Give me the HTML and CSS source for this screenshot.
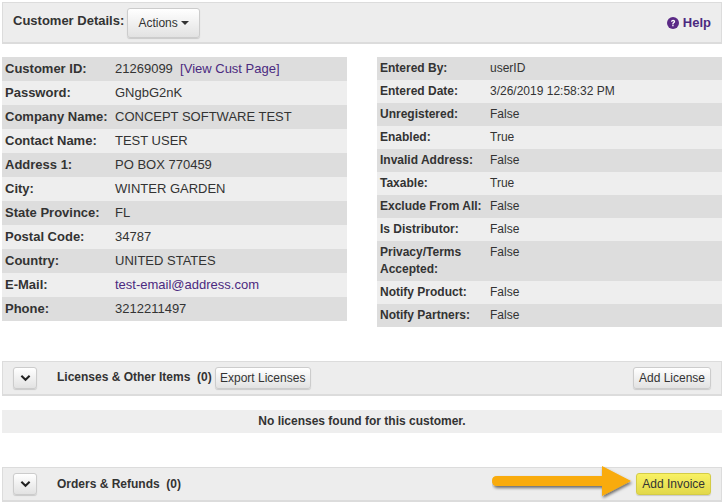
FILE: index.html
```html
<!DOCTYPE html>
<html lang="en">
<head>
<meta charset="utf-8">
<title>Customer Details</title>
<link rel="stylesheet" href="styles.css">
</head>
<body>
<div class="page">
  <header class="bar top-bar">
    <strong class="top-title">Customer Details:</strong>
    <button class="btn btn-actions">Actions <span class="caret"></span></button>
    <a class="help" href="#"><svg class="help-icon" viewBox="0 0 24 24"><circle cx="12" cy="12" r="12" fill="#5b2a86"/><path d="M8 9.500C8 7 9.800 5.500 12.200 5.500S16.300 7 16.300 9.100c0 3-3.200 3-3.200 5.200h-2.600c0-3.400 3-3.400 3-5.100 0-.8-.6-1.300-1.400-1.300-.9 0-1.400.6-1.500 1.600zM10.500 15.600h2.700v2.700h-2.700z" fill="#fff"/></svg> Help</a>
  </header>

  <div class="details">
    <dl class="table table-left">
      <div class="row"><dt>Customer ID:</dt><dd>21269099&nbsp; <a href="#">[View Cust Page]</a></dd></div>
      <div class="row"><dt>Password:</dt><dd>GNgbG2nK</dd></div>
      <div class="row"><dt>Company Name:</dt><dd>CONCEPT SOFTWARE TEST</dd></div>
      <div class="row"><dt>Contact Name:</dt><dd>TEST USER</dd></div>
      <div class="row"><dt>Address 1:</dt><dd>PO BOX 770459</dd></div>
      <div class="row"><dt>City:</dt><dd>WINTER GARDEN</dd></div>
      <div class="row"><dt>State Province:</dt><dd>FL</dd></div>
      <div class="row"><dt>Postal Code:</dt><dd>34787</dd></div>
      <div class="row"><dt>Country:</dt><dd>UNITED STATES</dd></div>
      <div class="row"><dt>E-Mail:</dt><dd><a href="#">test-email@address.com</a></dd></div>
      <div class="row"><dt>Phone:</dt><dd>3212211497</dd></div>
    </dl>
    <dl class="table table-right">
      <div class="row"><dt>Entered By:</dt><dd>userID</dd></div>
      <div class="row"><dt>Entered Date:</dt><dd>3/26/2019 12:58:32 PM</dd></div>
      <div class="row"><dt>Unregistered:</dt><dd>False</dd></div>
      <div class="row"><dt>Enabled:</dt><dd>True</dd></div>
      <div class="row"><dt>Invalid Address:</dt><dd>False</dd></div>
      <div class="row"><dt>Taxable:</dt><dd>True</dd></div>
      <div class="row"><dt>Exclude From All:</dt><dd>False</dd></div>
      <div class="row"><dt>Is Distributor:</dt><dd>False</dd></div>
      <div class="row"><dt>Privacy/Terms Accepted:</dt><dd>False</dd></div>
      <div class="row"><dt>Notify Product:</dt><dd>False</dd></div>
      <div class="row"><dt>Notify Partners:</dt><dd>False</dd></div>
    </dl>
  </div>

  <section class="bar section-bar licenses-bar">
    <button class="btn btn-toggle"><svg viewBox="0 0 12 8" class="chev"><path d="M1.500 1.500 6 6l4.500-4.500" fill="none" stroke="#222" stroke-width="2.200"/></svg></button>
    <strong class="section-title">Licenses &amp; Other Items&nbsp; (0)</strong>
    <button class="btn btn-small btn-export">Export Licenses</button>
    <button class="btn btn-small btn-end">Add License</button>
  </section>

  <div class="empty">No licenses found for this customer.</div>

  <section class="bar section-bar orders-bar">
    <button class="btn btn-toggle"><svg viewBox="0 0 12 8" class="chev"><path d="M1.500 1.500 6 6l4.500-4.500" fill="none" stroke="#222" stroke-width="2.200"/></svg></button>
    <strong class="section-title">Orders &amp; Refunds&nbsp; (0)</strong>
    <button class="btn btn-small btn-end btn-yellow">Add Invoice</button>
  </section>

  <svg class="arrow" viewBox="0 0 146 42" width="146" height="42">
    <defs><filter id="sh" x="-10%" y="-30%" width="120%" height="170%"><feDropShadow dx="1" dy="2" stdDeviation="1.800" flood-color="#000" flood-opacity=".55"/></filter></defs>
    <path filter="url(#sh)" d="M5 11H110V1L139 16 110 31V21H5Q0 21 0 16T5 11Z" fill="#f9ab08"/>
  </svg>
</div>
</body>
</html>
```

FILE: styles.css
```css
* { box-sizing: border-box; }
html, body { margin: 0; padding: 0; background: #fff; }
body { font-family: "Liberation Sans", Arial, sans-serif; font-size: 13px; color: #333; }
.page { position: relative; width: 724px; height: 504px; overflow: hidden; padding: 2px 2px 0; }
a { color: #4b2a80; text-decoration: none; }

.bar { display: flex; align-items: center; background: #ededed; border: 1px solid #dcdcdc; border-bottom-width: 2px; }
.top-bar { height: 42px; padding: 0 10px; }
.top-title { margin: 0 3px 4px 0; color: #333; }
.help { margin-left: auto; margin-right: 0; font-weight: bold; font-size: 13px; display: flex; align-items: center; gap: 4px; }
.help-icon { width: 12px; height: 12px; }

.btn { font-family: inherit; color: #333; border: 1px solid #ccc; border-radius: 3px; background: linear-gradient(#fff, #e2e2e2); box-shadow: 0 1px 1px rgba(0,0,0,.15); padding: 0; }
.btn-actions { width: 73px; height: 30px; font-size: 12px; }
.caret { display: inline-block; border: 4px solid transparent; border-top-color: #333; border-bottom: 0; vertical-align: middle; }
.btn-small { height: 22px; font-size: 12px; padding: 0 5px; }
.btn-export { width: 96px; padding: 0; }
.btn-toggle { width: 24px; height: 22px; display: flex; align-items: center; justify-content: center; }
.chev { width: 11px; height: 8px; }
.btn-end { margin-left: auto; }
.btn-yellow { background: linear-gradient(#f8f163, #e2d84a); border-color: #d4cc45; }

.details { display: flex; justify-content: space-between; margin-top: 13px; height: 304px; align-items: flex-start; }
.table { margin: 0; width: 345px; font-size: 13px; }
.row { display: flex; background: #eee; }
.row:nth-child(odd) { background: #ddd; }
dt { font-weight: bold; color: #333; flex: none; }
dd { margin: 0; color: #333; }
.table-left .row { height: 24px; line-height: 24px; }
.table-left dt { width: 113px; padding-left: 3px; }
.table-right { font-size: 12px; }
.table-right .row { padding: 3px 0; line-height: 17px; }
.table-right dt { width: 113px; padding-left: 3px; }
.table-right .row:nth-child(9) dt { padding-right: 30px; }

.section-bar { height: 35px; padding: 0 10px; font-size: 12px; }
.section-title { margin-left: 20px; margin-right: 3px; margin-bottom: 3px; }
.orders-bar .section-title { margin-bottom: 1px; }
.empty { height: 23px; margin-top: 14px; background: #eee; text-align: center; font-weight: bold; font-size: 12px; line-height: 23px; }
.orders-bar { margin-top: 34px; }

.arrow { position: absolute; left: 492px; top: 465px; }
```
